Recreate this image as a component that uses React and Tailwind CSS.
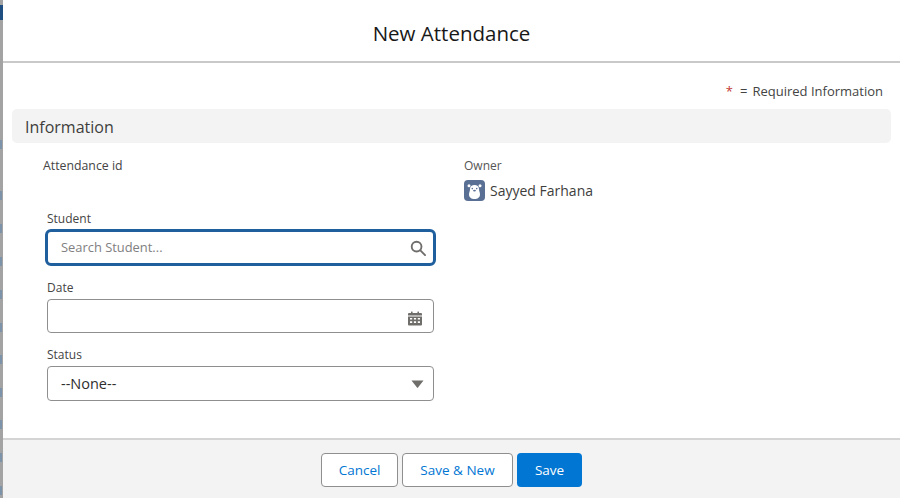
import React from 'react';

const font = { fontFamily: '"Open Sans", "Noto Sans", sans-serif' };

// sliver of the page behind the modal
function PageEdge() {
  const marks = [140, 191, 224, 257, 290, 323, 355, 388, 420, 453, 486];
  return (
    <div className="w-[3px] h-[498px] shrink-0 bg-[#a3a3a3] flex flex-col overflow-hidden">
      <div className="h-[5px] shrink-0" />
      <div className="h-[15px] shrink-0 bg-[#1f4f80]" />
      <div className="h-[478px] relative">
        {marks.map((y) => (
          <div key={y} className="absolute left-0 w-[2px] h-[9px] bg-[#7d93aa]" style={{ top: y - 20 }} />
        ))}
      </div>
    </div>
  );
}

function BearAvatar() {
  return (
    <svg width="21" height="21" viewBox="0 0 21 21" className="shrink-0">
      <rect width="21" height="21" rx="4" fill="#5a6f94" />
      <circle cx="5" cy="5.8" r="1.5" fill="#fff" />
      <circle cx="16" cy="5.8" r="1.5" fill="#fff" />
      <path d="M6 9c0-2.6 2-3.9 4.5-3.9S15 6.400 15 9c0 2.200 1 3.400 1 5.400 0 2.800-2.500 4.600-5.500 4.600S5 17.200 5 14.400C5 12.400 6 11.200 6 9z" fill="#fff" />
      <circle cx="8.300" cy="8.600" r=".8" fill="#5a6f94" />
      <circle cx="12.700" cy="8.600" r=".8" fill="#5a6f94" />
      <ellipse cx="10.500" cy="10.600" rx="1.400" ry=".9" fill="#5a6f94" />
    </svg>
  );
}

function CalendarIcon() {
  return (
    <svg width="14" height="15" viewBox="0 0 14 15" fill="#706e6b">
      <rect x="3" y="0.5" width="1.6" height="2.5" rx=".5" />
      <rect x="9.4" y="0.5" width="1.6" height="2.5" rx=".5" />
      <path d="M1 2h12a1 1 0 0 1 1 1v1.6H0V3a1 1 0 0 1 1-1z" />
      <path fillRule="evenodd" d="M0 5.600h14V13.500a1 1 0 0 1-1 1H1a1 1 0 0 1-1-1V5.600zM2 7v1.600h2.200V7H2zm3.900 0v1.600h2.200V7H5.900zm3.900 0v1.600H12V7H9.800zM2 10.200v1.800h2.200v-1.800H2zm3.900 0v1.800h2.200v-1.800H5.900zm3.900 0v1.800H12v-1.800H9.800z" />
    </svg>
  );
}

function SearchIcon() {
  return (
    <svg width="16" height="16" viewBox="0 0 17 17" fill="none" stroke="#706e6b" strokeWidth="2">
      <circle cx="7" cy="7" r="5.200" />
      <path d="M11 11l5 5" strokeLinecap="round" />
    </svg>
  );
}

export default function App() {
  return (
    <div className="w-[900px] h-[498px] flex overflow-hidden bg-white text-[#3e3e3c]" style={font}>
      <PageEdge />

      <div className="flex-1 flex flex-col min-w-0">
        {/* header */}
        <div className="h-[63px] shrink-0 flex items-center justify-center border-b-2 border-[#c9c9c9]">
          <h1 className="text-[20.5px] leading-7 text-[#181818] pt-[5px]">New Attendance</h1>
        </div>

        {/* body */}
        <div className="flex-1 min-h-0 pt-[19px] pl-[9px] pr-[9px]">
          <div className="h-[18px] flex items-center justify-end pr-2 pt-[2px] text-[13px] text-[#444]">
            <span className="text-[#c23934] mr-[7px]">*</span>
            <span className="mr-[5px]">=</span>
            <span>Required Information</span>
          </div>

          <div className="mt-[9px] h-[34px] flex items-center pl-[13px] pt-[2px] bg-[#f3f3f3] rounded-[5px] text-[16px] text-[#3e3e3c]">
            Information
          </div>

          <div className="grid grid-cols-[452px_1fr] pt-[14px]">
            <div className="pl-[31px]">
              <div className="h-[17px] text-[12.300px] leading-[17px] text-[#444]">Attendance id</div>

              <div className="pl-1 mt-[36px] w-[397px]">
                <div className="text-[12px] leading-[17px] text-[#444]">Student</div>
                <div className="-ml-[2px] mt-[2px] w-[391px] h-[37px] flex items-center justify-between border-[3px] border-[#1f5f9e] rounded-[6px] pl-[13px] pr-[7px]">
                  <span className="text-[12.900px] text-[#808080]">Search Student...</span>
                  <SearchIcon />
                </div>

                <div className="mt-[13px] text-[12px] leading-[17px] text-[#444]">Date</div>
                <div className="mt-[3px] w-[387px] h-[34px] flex items-center justify-end border border-[#8f8f8f] rounded-[4px] pr-[11px] pt-[4px]">
                  <CalendarIcon />
                </div>

                <div className="mt-[13px] text-[12px] leading-[17px] text-[#444]">Status</div>
                <div className="mt-[3px] w-[387px] h-[35px] flex items-center justify-between border border-[#8f8f8f] rounded-[4px] pl-[13px] pr-[9px]">
                  <span className="text-[14.500px] text-[#2e2e2e]">--None--</span>
                  <svg width="13" height="8" viewBox="0 0 13 8" fill="#706e6b">
                    <path d="M.5.5h12L7 7.500a.6.6 0 0 1-1 0z" />
                  </svg>
                </div>
              </div>
            </div>

            <div>
              <div className="h-[17px] text-[12px] leading-[17px] text-[#555]">Owner</div>
              <div className="mt-[6px] flex items-center gap-[5px] text-[14px] leading-[21px] text-[#3e3e3c]">
                <BearAvatar />
                <span>Sayyed Farhana</span>
              </div>
            </div>
          </div>
        </div>

        {/* footer */}
        <div className="h-[60px] shrink-0 flex items-center justify-center gap-1 border-t-2 border-[#d4d4d4] bg-[#f3f3f3] pt-[2px]">
          <button className="w-[77px] h-[34px] bg-white border border-[#8f8f8f] rounded-[4px] text-[13.500px] text-[#0176d3]">Cancel</button>
          <button className="w-[111px] h-[34px] bg-white border border-[#8f8f8f] rounded-[4px] text-[13.500px] text-[#0176d3]">Save &amp; New</button>
          <button className="w-[65px] h-[34px] bg-[#0176d3] rounded-[4px] text-[13.500px] text-white">Save</button>
        </div>
      </div>
    </div>
  );
}
